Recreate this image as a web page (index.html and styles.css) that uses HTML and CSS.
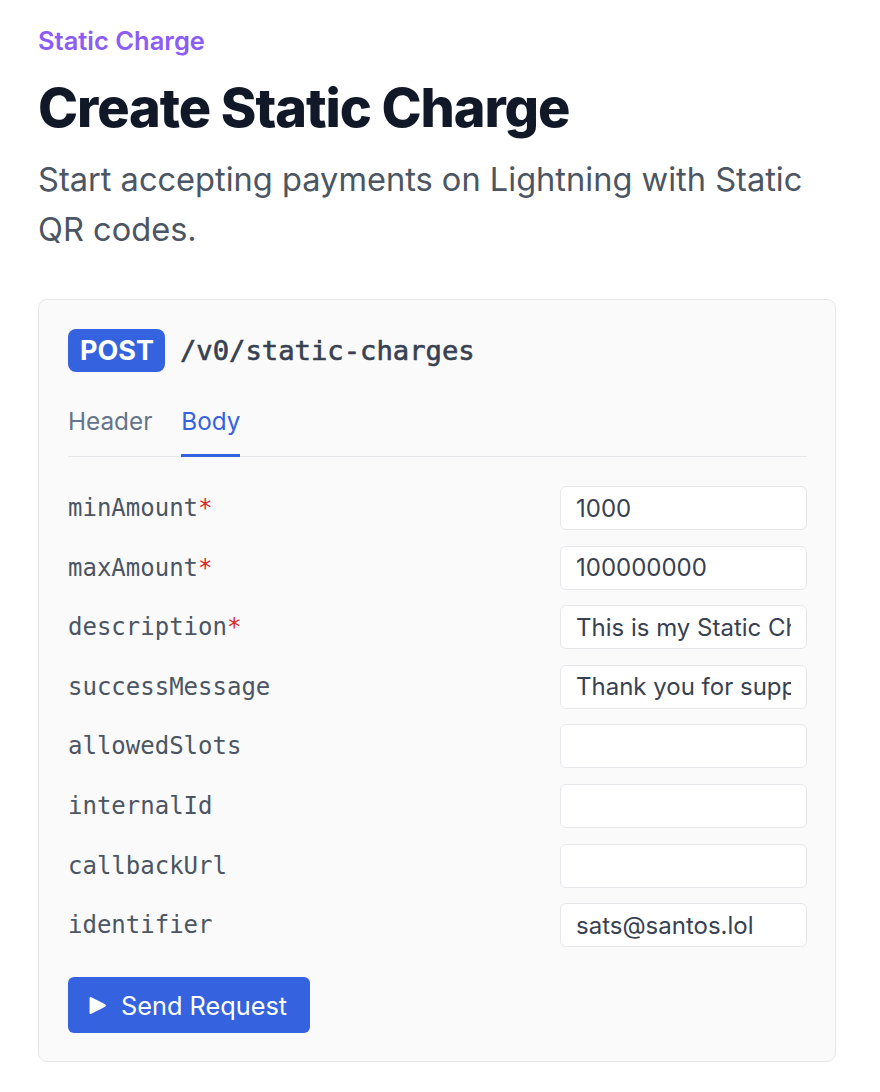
FILE: index.html
```html
<!DOCTYPE html>
<html>
<head>
<meta charset="utf-8">
<link rel="stylesheet" href="styles.css">
</head>
<body>
<main class="page">
  <div class="eyebrow">Static Charge</div>
  <h1 class="title">Create Static Charge</h1>
  <p class="lead">Start accepting payments on Lightning with Static QR codes.</p>

  <section class="card">
    <div class="endpoint">
      <span class="method">POST</span>
      <span class="path">/v0/static-charges</span>
    </div>
    <div class="tabs">
      <span class="tab">Header</span>
      <span class="tab active">Body</span>
    </div>
    <div class="fields">
      <div class="field"><span class="label">minAmount<span class="req">*</span></span><input class="input" value="1000"></div>
      <div class="field"><span class="label">maxAmount<span class="req">*</span></span><input class="input" value="100000000"></div>
      <div class="field"><span class="label">description<span class="req">*</span></span><input class="input" value="This is my Static Charge"></div>
      <div class="field"><span class="label">successMessage</span><input class="input" value="Thank you for supporting"></div>
      <div class="field"><span class="label">allowedSlots</span><input class="input" value=""></div>
      <div class="field"><span class="label">internalId</span><input class="input" value=""></div>
      <div class="field"><span class="label">callbackUrl</span><input class="input" value=""></div>
      <div class="field"><span class="label">identifier</span><input class="input" value="sats@santos.lol"></div>
    </div>
    <button class="send">
      <svg class="play" width="19" height="19" viewBox="0 0 18 18"><path d="M1.5 2 Q1.5 0.3 3.1 1.1 L16.3 7.8 Q17.8 9 16.3 10.2 L3.1 16.9 Q1.5 17.7 1.5 16 Z" fill="#fff"/></svg>
      <span>Send Request</span>
    </button>
  </section>
</main>
</body>
</html>
```

FILE: styles.css
```css
* { box-sizing: border-box; }
html, body { margin: 0; padding: 0; background: #ffffff; }
body { font-family: Inter, "Noto Sans", sans-serif; color: #111827; }

.page { padding: 26px 44px 0 38px; width: 880px; }

.eyebrow {
  font-size: 25.5px;
  line-height: 30px;
  font-weight: 600;
  color: #8b5cf6;
}

.title {
  margin: 22px 0 0 0;
  font-size: 54px;
  line-height: 60px;
  font-weight: 800;
  letter-spacing: -0.02em;
  color: #111827;
}

.lead {
  margin: 16px 0 0 0;
  font-size: 32.6px;
  line-height: 50px;
  color: #4b5563;
  max-width: 800px;
}

.card {
  margin-top: 45px;
  width: 798px;
  background: #fafafa;
  border: 1px solid #e5e7eb;
  border-radius: 9px;
  padding: 29px 28px 28px 29px;
}

.endpoint { display: flex; align-items: center; gap: 15px; }
.method {
  background: #3563e0;
  color: #fff;
  font-weight: 700;
  font-size: 27px;
  line-height: 43px;
  height: 43px;
  padding: 0 11px 0 12px;
  border-radius: 8px;
}
.path {
  font-family: "DejaVu Sans Mono", monospace;
  font-size: 27.2px;
  font-weight: 400;
  -webkit-text-stroke: 0.6px #374151;
  color: #374151;
}

.tabs {
  display: flex;
  gap: 29px;
  margin-top: 30px;
  border-bottom: 1px solid #e5e7eb;
}
.tab {
  font-size: 24.3px;
  line-height: 30px;
  padding: 4px 0 18px;
  color: #64748b;
  border-bottom: 3px solid transparent;
  margin-bottom: -1px;
}
.tab.active { color: #3563e0; border-bottom-color: #3563e0; }

.fields {
  display: flex;
  flex-direction: column;
  gap: 15.6px;
  margin-top: 29px;
}
.field {
  display: flex;
  align-items: center;
  justify-content: space-between;
}
.label {
  font-family: "DejaVu Sans Mono", monospace;
  font-size: 24px;
  color: #4b5563;
}
.req { color: #dc2626; }
.input {
  width: 247px;
  height: 44px;
  border: 1px solid #e5e7eb;
  border-radius: 6px;
  background: #fff;
  padding: 0 15px;
  font-family: Inter, "Noto Sans", sans-serif;
  font-size: 24px;
  color: #374151;
  outline: none;
}

.send {
  margin-top: 30px;
  display: flex;
  align-items: center;
  gap: 14px;
  height: 56px;
  padding: 0 23px 0 20px;
  background: #3563e0;
  color: #fff;
  border: none;
  border-radius: 6px;
  font-family: Inter, "Noto Sans", sans-serif;
  font-size: 25.3px;
}
.play { display: block; flex-shrink: 0; }
```
